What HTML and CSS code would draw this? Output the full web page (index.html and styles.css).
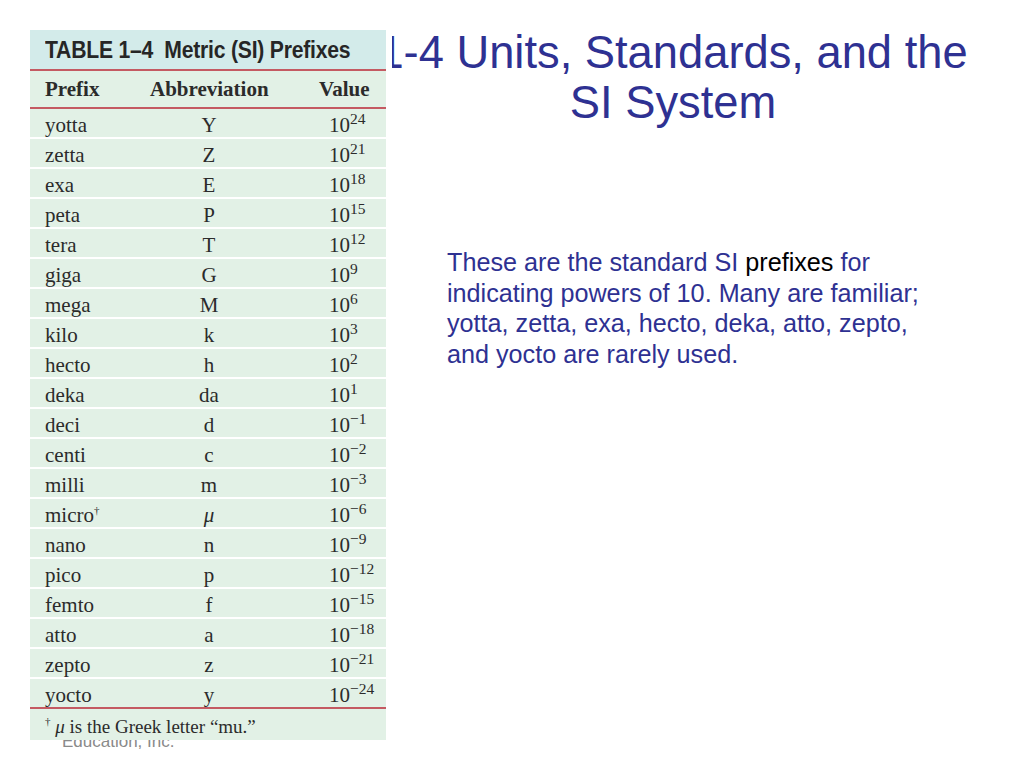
FILE: index.html
```html
<!DOCTYPE html>
<html>
<head>
<meta charset="utf-8">
<link rel="stylesheet" href="styles.css">
</head>
<body>
<div class="slide">
  <h1 class="title">1-4 Units, Standards, and the<br>SI System</h1>
  <p class="body-text">These are the standard SI <span class="black">prefixes</span> for<br>indicating powers of 10. Many are familiar;<br>yotta, zetta, exa, hecto, deka, atto, zepto,<br>and yocto are rarely used.</p>
  <div class="credit">Education, Inc.</div>

  <div class="si-table">
    <div class="caption"><span class="cap-text">TABLE 1&ndash;4&nbsp; Metric (SI) Prefixes</span></div>
    <div class="head">
      <span class="c1">Prefix</span><span class="c2">Abbreviation</span><span class="c3">Value</span>
    </div>
    <div class="rows">
      <div class="row"><span class="c1">yotta</span><span class="c2">Y</span><span class="c3">10<sup>24</sup></span></div>
      <div class="row"><span class="c1">zetta</span><span class="c2">Z</span><span class="c3">10<sup>21</sup></span></div>
      <div class="row"><span class="c1">exa</span><span class="c2">E</span><span class="c3">10<sup>18</sup></span></div>
      <div class="row"><span class="c1">peta</span><span class="c2">P</span><span class="c3">10<sup>15</sup></span></div>
      <div class="row"><span class="c1">tera</span><span class="c2">T</span><span class="c3">10<sup>12</sup></span></div>
      <div class="row"><span class="c1">giga</span><span class="c2">G</span><span class="c3">10<sup>9</sup></span></div>
      <div class="row"><span class="c1">mega</span><span class="c2">M</span><span class="c3">10<sup>6</sup></span></div>
      <div class="row"><span class="c1">kilo</span><span class="c2">k</span><span class="c3">10<sup>3</sup></span></div>
      <div class="row"><span class="c1">hecto</span><span class="c2">h</span><span class="c3">10<sup>2</sup></span></div>
      <div class="row"><span class="c1">deka</span><span class="c2">da</span><span class="c3">10<sup>1</sup></span></div>
      <div class="row"><span class="c1">deci</span><span class="c2">d</span><span class="c3">10<sup>&minus;1</sup></span></div>
      <div class="row"><span class="c1">centi</span><span class="c2">c</span><span class="c3">10<sup>&minus;2</sup></span></div>
      <div class="row"><span class="c1">milli</span><span class="c2">m</span><span class="c3">10<sup>&minus;3</sup></span></div>
      <div class="row"><span class="c1">micro<sup class="dag">&dagger;</sup></span><span class="c2 mu">&mu;</span><span class="c3">10<sup>&minus;6</sup></span></div>
      <div class="row"><span class="c1">nano</span><span class="c2">n</span><span class="c3">10<sup>&minus;9</sup></span></div>
      <div class="row"><span class="c1">pico</span><span class="c2">p</span><span class="c3">10<sup>&minus;12</sup></span></div>
      <div class="row"><span class="c1">femto</span><span class="c2">f</span><span class="c3">10<sup>&minus;15</sup></span></div>
      <div class="row"><span class="c1">atto</span><span class="c2">a</span><span class="c3">10<sup>&minus;18</sup></span></div>
      <div class="row"><span class="c1">zepto</span><span class="c2">z</span><span class="c3">10<sup>&minus;21</sup></span></div>
      <div class="row last"><span class="c1">yocto</span><span class="c2">y</span><span class="c3">10<sup>&minus;24</sup></span></div>
    </div>
    <div class="foot"><sup class="dag">&dagger;</sup> <span class="mu">&mu;</span> is the Greek letter &ldquo;mu.&rdquo;</div>
  </div>
</div>
</body>
</html>
```

FILE: styles.css
```css
html, body {
  margin: 0;
  padding: 0;
  background: #ffffff;
}

.slide {
  position: relative;
  width: 1024px;
  height: 768px;
  overflow: hidden;
  background: #ffffff;
  font-family: "Liberation Sans", Arial, sans-serif;
}

.title {
  margin: 0;
  padding: 28px 0 0 353px;
  width: 640px;
  text-align: center;
  font-weight: normal;
  font-size: 45.3px;
  line-height: 50px;
  color: #2e3192;
}

.body-text {
  margin: 0;
  padding: 119px 0 0 447px;
  font-size: 25.2px;
  line-height: 30.5px;
  color: #2e3192;
  white-space: nowrap;
}

.black {
  color: #000000;
}

.credit {
  position: absolute;
  left: 62px;
  top: 732px;
  font-size: 17px;
  line-height: 20px;
  color: #8a8a8a;
}

.si-table {
  position: absolute;
  left: 30px;
  top: 30px;
  width: 356px;
  z-index: 2;
  background: #e2f1e6;
  border-right: 6px solid #ffffff;
  font-family: "Liberation Serif", "Times New Roman", serif;
  color: #2b2b2b;
}

.caption {
  height: 41px;
  box-sizing: border-box;
  padding: 6px 0 0 15px;
  background: #d3ebea;
  border-bottom: 2px solid #c45a62;
  white-space: nowrap;
}

.cap-text {
  display: inline-block;
  transform: scaleX(0.9);
  transform-origin: left center;
  font-family: "Liberation Sans", Arial, sans-serif;
  font-weight: bold;
  font-size: 23.5px;
  line-height: 28px;
  letter-spacing: -0.25px;
  color: #262626;
}

.head,
.row {
  display: flex;
  align-items: center;
  padding-left: 15px;
  font-size: 21px;
}

.head {
  height: 36px;
  font-weight: bold;
  border-bottom: 2px solid #c45a62;
}

.row {
  height: 28px;
  border-bottom: 2px solid #ffffff;
}

.row > span {
  position: relative;
  top: 2px;
}

.row.last {
  border-bottom: 2px solid #c45a62;
}

.c1 {
  width: 105px;
}

.c2 {
  width: 118px;
  text-align: center;
}

.c3 {
  padding-left: 61px;
  white-space: nowrap;
}

.head .c3 {
  padding-left: 51px;
}

.c3 sup {
  font-size: 15.5px;
  line-height: 0;
  vertical-align: 8px;
}

.mu {
  font-style: italic;
}

sup.dag {
  font-size: 11px;
  line-height: 0;
  vertical-align: 8px;
}

.foot {
  height: 31px;
  box-sizing: border-box;
  padding: 5px 0 0 15px;
  font-size: 19px;
  line-height: 26px;
}
```
